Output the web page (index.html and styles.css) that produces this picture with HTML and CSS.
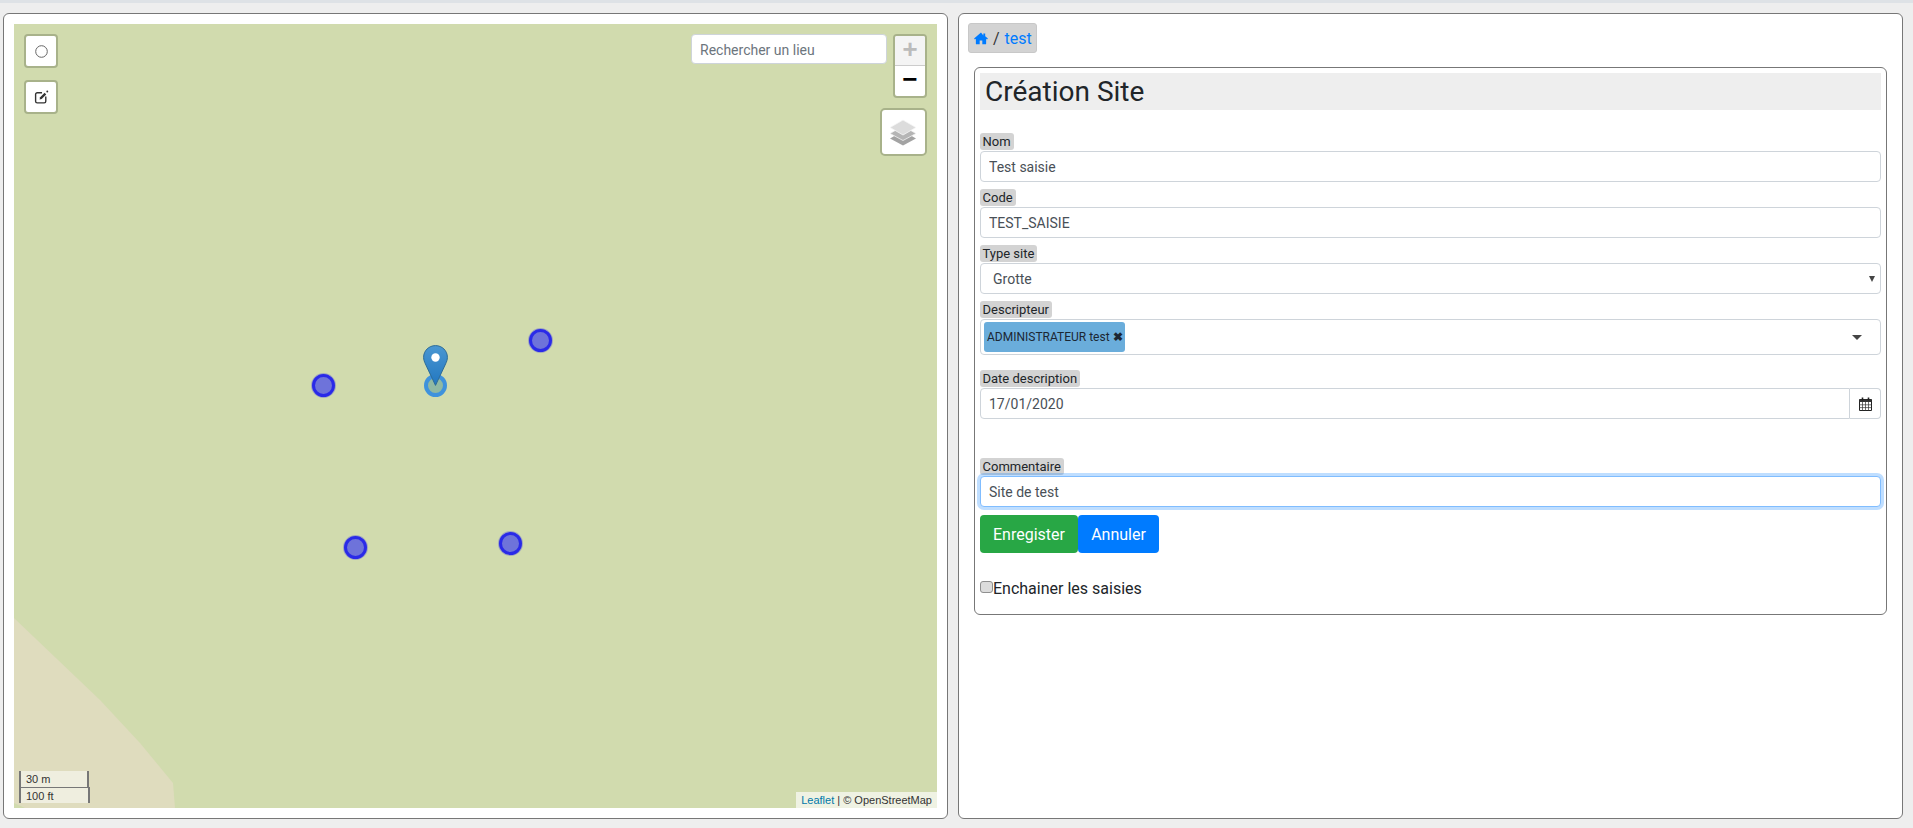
FILE: index.html
```html
<!DOCTYPE html>
<html lang="fr">
<head>
<meta charset="utf-8">
<title>Création Site</title>
<link rel="stylesheet" href="styles.css">
</head>
<body>
<div class="topstrip"></div>
<main class="layout">
  <section class="panel map-panel">
    <div class="map">
      <svg class="terrain" viewBox="0 0 923 784" width="923" height="784">
        <polygon points="0,594 86,676 126,719 159,759 161,784 0,784" fill="#dfdcbe"/>
        <polygon points="0,779 11,784 0,784" fill="#d1dbae"/>
      </svg>
      <button class="ctl ctl-circle" type="button" aria-label="Cercle">
        <svg width="15" height="15" viewBox="0 0 15 15"><circle cx="7.5" cy="7.5" r="5.8" fill="none" stroke="#666" stroke-width="1"/></svg>
      </button>
      <button class="ctl ctl-edit" type="button" aria-label="Éditer">
        <svg width="15" height="15" viewBox="0 0 14 14"><path d="M7.5 2.5H3a1.5 1.5 0 0 0-1.5 1.5v6.5A1.5 1.5 0 0 0 3 12h6.5a1.5 1.5 0 0 0 1.5-1.5V6" fill="none" stroke="#333" stroke-width="1.3"/><path d="M5.2 8.8l.5-2 4.2-4.2 1.5 1.5-4.2 4.2z" fill="#333"/><circle cx="12.4" cy="1.4" r="0.9" fill="#333"/></svg>
      </button>
      <input class="search" type="text" placeholder="Rechercher un lieu">
      <div class="zoom-ctl">
        <span class="zoom-in">+</span>
        <span class="zoom-out">−</span>
      </div>
      <div class="layers">
        <svg width="30" height="27" viewBox="0 0 30 27">
          <polygon points="15,12 28,19.5 15,26.5 2,19.5" fill="#a3a3a3"/>
          <polygon points="15,7 28,14.5 15,21.5 2,14.5" fill="#b5b5b5" stroke="#f2f2f2" stroke-width=".8"/>
          <polygon points="15,1 28,8.5 15,16 2,8.5" fill="#dcdcdc" stroke="#f6f6f6" stroke-width=".8"/>
        </svg>
      </div>
      <span class="dot dot-a"></span>
      <span class="dot dot-b"></span>
      <span class="dot dot-c"></span>
      <span class="dot dot-d"></span>
      <span class="dot dot-sel"></span>
      <svg class="pin" width="25" height="41" viewBox="0 0 25 41">
        <defs><linearGradient id="pg" x1="0" y1="0" x2="0" y2="1"><stop offset="0" stop-color="#4a97d2"/><stop offset="1" stop-color="#2277c0"/></linearGradient></defs>
        <path d="M12.5.6C5.8.6.6 5.8.6 12.3c0 2.4.8 4.5 1.8 6.6L12.5 40.4l10.1-21.5c1-2.1 1.8-4.2 1.8-6.6C24.4 5.8 19.2.6 12.5.6z" fill="url(#pg)" stroke="#2e6c97" stroke-width="1"/>
        <circle cx="12.5" cy="12.5" r="4.2" fill="#fff"/>
      </svg>
      <div class="scale">
        <span class="scale-m">30 m</span>
        <span class="scale-ft">100 ft</span>
      </div>
      <div class="attribution"><a href="#">Leaflet</a> | © OpenStreetMap</div>
    </div>
  </section>
  <section class="panel form-panel">
    <nav class="crumb">
      <a href="#" class="crumb-home" aria-label="Accueil"><svg width="14" height="13" viewBox="0 0 15 13"><path d="M7.5 0.2L.1 6.4l.9 1.1L2 6.7V12a.7.7 0 0 0 .7.7h3.4V8.6h2.8v4.1h3.4A.7.7 0 0 0 13 12V6.7l1 .8.9-1.1-2.9-2.4V1.2h-2v2z" fill="#007bff"/></svg></a>
      <span class="crumb-sep">/</span>
      <a href="#" class="crumb-link">test</a>
    </nav>
    <div class="card">
      <h1 class="title">Création Site</h1>
      <form class="form">
        <div class="field">
          <label class="tag">Nom</label>
          <input class="input" type="text" value="Test saisie">
        </div>
        <div class="field">
          <label class="tag">Code</label>
          <input class="input" type="text" value="TEST_SAISIE">
        </div>
        <div class="field">
          <label class="tag">Type site</label>
          <div class="input select"><span>Grotte</span><i class="select-arrow"></i></div>
        </div>
        <div class="field">
          <label class="tag">Descripteur</label>
          <div class="multi">
            <span class="chip">ADMINISTRATEUR test <b class="chip-x">✖</b></span>
            <i class="multi-arrow"></i>
          </div>
        </div>
        <div class="field field-date">
          <label class="tag">Date description</label>
          <div class="date">
            <input class="input date-input" type="text" value="17/01/2020">
            <span class="date-btn">
              <svg width="13" height="14" viewBox="0 0 13 14"><path d="M.5 2.5h12v11H.5z" fill="#fff" stroke="#222"/><path d="M.5 2.5h12V5H.5z" fill="#333"/><path d="M.5 7.8h12M.5 10.6h12M3.5 5v8.5M6.5 5v8.5M9.5 5v8.5" stroke="#333" stroke-width=".7" fill="none"/><path d="M3.5.5v3M9.5.5v3" stroke="#222" stroke-width="1.6"/></svg>
            </span>
          </div>
        </div>
        <div class="field field-comment">
          <label class="tag">Commentaire</label>
          <input class="input input-focus" type="text" value="Site de test">
        </div>
        <div class="actions">
          <button class="btn btn-green" type="button">Enregister</button>
          <button class="btn btn-blue" type="button">Annuler</button>
        </div>
        <label class="chain"><input class="chain-box" type="checkbox">Enchainer les saisies</label>
      </form>
    </div>
  </section>
</main>
</body>
</html>
```
FILE: styles.css
```css
* { box-sizing: border-box; }
html, body { margin: 0; height: 100%; }
body {
  background: #eeeeee;
  font-family: Roboto, "Liberation Sans", sans-serif;
  color: #212529;
  overflow: hidden;
}
.topstrip { height: 3px; background: #dee2e6; }
.layout {
  display: grid;
  grid-template-columns: 945px 945px;
  column-gap: 10px;
  padding: 10px 0 0 3px;
  height: 816px;
}
.panel {
  background: #fff;
  border: 1px solid #777;
  border-radius: 6px;
}
.map-panel { padding: 10px; }
.form-panel { padding: 9px; display: flex; flex-direction: column; align-items: flex-start; }

/* map canvas */
.map {
  position: relative;
  width: 923px;
  height: 784px;
  background: #d1dbae;
  overflow: hidden;
  font-family: "Liberation Sans", sans-serif;
}
.terrain { position: absolute; left: 0; top: 0; }
.ctl {
  position: absolute;
  left: 10px;
  width: 34px;
  height: 34px;
  padding: 0;
  display: flex;
  align-items: center;
  justify-content: center;
  background: #fff;
  border: 2px solid #a8b28a;
  border-radius: 4px;
}
.ctl-circle { top: 10px; }
.ctl-edit { top: 56px; }
.search {
  position: absolute;
  left: 677px;
  top: 10px;
  width: 196px;
  height: 30px;
  padding: 2px 8px 0;
  border: 1px solid #ced4da;
  border-radius: 4px;
  background: #fff;
  font: 14px Roboto, sans-serif;
  color: #495057;
}
.search::placeholder { color: #6c757d; opacity: 1; }
.zoom-ctl {
  position: absolute;
  left: 879px;
  top: 10px;
  width: 34px;
  height: 64px;
  display: flex;
  flex-direction: column;
  border: 2px solid #a8b28a;
  border-radius: 4px;
  overflow: hidden;
  background: #fff;
}
.zoom-in, .zoom-out {
  display: flex;
  align-items: center;
  justify-content: center;
  width: 100%;
  font: bold 26px "Liberation Mono", monospace;
}
.zoom-in { height: 30px; background: #f4f4f4; color: #bbb; border-bottom: 1px solid #ccc; }
.zoom-out { height: 30px; color: #000; }
.layers {
  position: absolute;
  left: 866px;
  top: 84px;
  width: 47px;
  height: 48px;
  display: flex;
  align-items: center;
  justify-content: center;
  padding-right: 1px;
  background: #fff;
  border: 2px solid #a8b28a;
  border-radius: 5px;
}
.dot {
  position: absolute;
  width: 23px;
  height: 23px;
  border-radius: 50%;
  border: 3px solid #2a2ae8;
  background-color: #6e73da;
  box-shadow: 0 0 0 1px rgba(70,70,220,.35);
}
.dot-a { left: 298px; top: 349.5px; }
.dot-b { left: 515px; top: 304.5px; }
.dot-c { left: 330px; top: 511.5px; }
.dot-d { left: 484.5px; top: 507.5px; }
.dot-sel {
  left: 409.5px;
  top: 349.5px;
  border: 4px solid #3f92dc;
  background: #90b9a3;
  box-shadow: none;
}
.pin { position: absolute; left: 409px; top: 321px; }
.scale {
  position: absolute;
  left: 5px;
  bottom: 5px;
  display: flex;
  flex-direction: column;
  align-items: flex-start;
  font-size: 11px;
  line-height: 14px;
  color: #333;
}
.scale-m, .scale-ft {
  height: 16px;
  padding: 1px 5px;
  background: rgba(255,255,255,.5);
  border: 2px solid #777;
  white-space: nowrap;
}
.scale-m { width: 70px; border-top: 0; border-bottom: 0; }
.scale-ft { width: 71px; border-bottom: 0; border-top: 1px solid #777; }
.attribution {
  position: absolute;
  right: 0;
  bottom: 0;
  height: 16px;
  padding: 0 5px;
  font-size: 11px;
  line-height: 16px;
  color: #333;
  background: rgba(255,255,255,.65);
  white-space: nowrap;
}
.attribution a { color: #0078a8; text-decoration: none; }

/* form */
.crumb {
  height: 30px;
  width: 69px;
  display: flex;
  align-items: center;
  gap: 5px;
  padding: 0 5px;
  background: #d3d3d3;
  border: 1px solid #c8c8c8;
  border-radius: 3px;
  font-size: 16px;
  margin-bottom: 14px;
}
.crumb-home { display: flex; }
.crumb-link { color: #007bff; text-decoration: none; }
.crumb-sep { color: #333; }
.card {
  margin-left: 6px;
  width: 913px;
  height: 548px;
  padding: 5px;
  border: 1px solid #777;
  border-radius: 6px;
}
.title {
  margin: 0 0 23px;
  height: 37px;
  padding: 0 5px;
  background: #eeeeee;
  font-size: 28px;
  font-weight: 400;
  line-height: 37px;
}
.form { display: flex; flex-direction: column; align-items: stretch; }
.field { display: flex; flex-direction: column; align-items: flex-start; margin-bottom: 7px; }
.tag {
  height: 17px;
  margin-bottom: 1px;
  padding: 0 3px 0 2.5px;
  background: #d3d3d3;
  border-radius: 3px;
  font-size: 13px;
  line-height: 17px;
}
.input {
  width: 100%;
  height: 31px;
  padding: 0 8px;
  border: 1px solid #ced4da;
  border-radius: 4px;
  background: #fff;
  color: #495057;
  font: 14px Roboto, sans-serif;
}
.select {
  display: flex;
  align-items: center;
  justify-content: space-between;
  padding: 0 5px 0 12px;
}
.select-arrow {
  width: 0; height: 0;
  border-left: 3px solid transparent;
  border-right: 3px solid transparent;
  border-top: 6px solid #444;
}
.multi {
  width: 100%;
  height: 36px;
  padding: 2px 18px 2px 3px;
  display: flex;
  align-items: center;
  justify-content: space-between;
  border: 1px solid #ced4da;
  border-radius: 4px;
}
.chip {
  height: 30px;
  width: 141px;
  padding: 0 3px;
  background: #6aaddb;
  border-radius: 3px;
  font-size: 12px;
  line-height: 30px;
  color: #1c2733;
  white-space: nowrap;
}
.chip-x { font-size: 12px; }
.multi-arrow {
  width: 0; height: 0;
  border-left: 5px solid transparent;
  border-right: 5px solid transparent;
  border-top: 5px solid #444;
}
.field-date { margin-top: 8px; margin-bottom: 0; }
.date { display: flex; width: 100%; }
.date-input { border-radius: 4px 0 0 4px; flex: 1; }
.date-btn {
  width: 31px;
  height: 31px;
  display: flex;
  align-items: center;
  justify-content: center;
  border: 1px solid #ced4da;
  border-left: 0;
  border-radius: 0 4px 4px 0;
}
.field-comment { margin-top: 39px; margin-bottom: 8px; }
.input-focus {
  border-color: #80bdff;
  box-shadow: 0 0 0 3px rgba(0,123,255,.25);
  outline: 0;
}
.actions { display: flex; }
.btn {
  height: 38px;
  padding: 0 12px;
  border: 0;
  border-radius: 4px;
  color: #fff;
  font: 16px Roboto, sans-serif;
}
.btn-green { background: #28a745; width: 98px; }
.btn-blue { background: #007bff; width: 81px; }
.chain {
  display: flex;
  align-items: center;
  margin-top: 26px;
  font-size: 16px;
  line-height: 19px;
  color: #212529;
}
.chain-box {
  appearance: none;
  width: 13px;
  height: 12px;
  margin: -3px 0 0;
  background: #dcdcdc;
  border: 1px solid #8f8f8f;
  border-radius: 3px;
}
```
